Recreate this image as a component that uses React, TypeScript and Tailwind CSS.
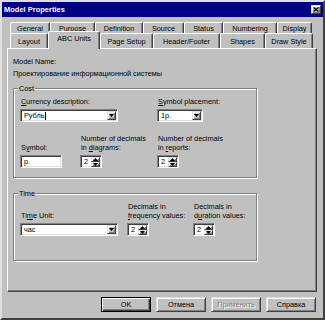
import React from 'react';

const base = "font-['Liberation_Sans',Arial,sans-serif] text-[7.3px] leading-[9px]";
const txt = `${base} text-black`;
const sunken =
  'border border-t-[#808080] border-l-[#808080] border-r-white border-b-white shadow-[inset_1px_1px_0_#404040,inset_-1px_-1px_0_#dfdfdf] bg-white';
const raised =
  'border border-t-[#dfdfdf] border-l-[#dfdfdf] border-r-[#404040] border-b-[#404040] shadow-[inset_1px_1px_0_#fff,inset_-1px_-1px_0_#808080] bg-[#c0c0c0]';

const topTabs = [
  { label: 'General', w: 'w-[40px]' },
  { label: 'Purpose', w: 'w-[45px]' },
  { label: 'Definition', w: 'w-[48px]' },
  { label: 'Source', w: 'w-[41px]' },
  { label: 'Status', w: 'w-[39px]' },
  { label: 'Numbering', w: 'w-[54px]' },
  { label: 'Display', w: 'w-[35px]' },
];

const frontTabs = [
  { label: 'Layout', w: 'w-[38px]' },
  { label: 'ABC Units', w: 'w-[52px]', active: true },
  { label: 'Page Setup', w: 'w-[53px]' },
  { label: 'Header/Footer', w: 'w-[67px]' },
  { label: 'Shapes', w: 'w-[45px]' },
  { label: 'Draw Style', w: 'w-[48px]' },
];

function Arrow({ up }: { up?: boolean }) {
  return (
    <svg width="5" height="3" viewBox="0 0 5 3">
      <path d={up ? 'M2.5 0L5 3H0Z' : 'M0 0H5L2.5 3Z'} fill="#000" />
    </svg>
  );
}

function Combo({ value, width, caret }: { value: string; width: string; caret?: boolean }) {
  return (
    <div className={`${sunken} ${width} h-[13px] flex p-[1px]`}>
      <div className={`${txt} flex-1 flex items-center pl-[2px]`}>
        {value}
        {caret && <span className="inline-block w-px h-[8px] bg-black" />}
      </div>
      <div className={`${raised} w-[9px] h-full flex items-center justify-center`}>
        <Arrow />
      </div>
    </div>
  );
}

function Spinner({ value }: { value: string }) {
  return (
    <div className={`${sunken} w-[22px] h-[13px] flex p-[1px]`}>
      <div className={`${txt} flex-1 flex items-center pl-[2px]`}>{value}</div>
      <div className="w-[9px] h-full flex flex-col">
        <div className={`${raised} flex-1 flex items-center justify-center`}>
          <Arrow up />
        </div>
        <div className={`${raised} flex-1 flex items-center justify-center`}>
          <Arrow />
        </div>
      </div>
    </div>
  );
}

// etched group box; the caption sits over the top border
function Group({ title, children, className }: { title: string; children: React.ReactNode; className: string }) {
  return (
    <div
      className={`relative w-[244px] border border-[#808080] shadow-[1px_1px_0_#fff,inset_1px_1px_0_#fff] pl-[6px] pt-[8px] ${className}`}
    >
      <span className={`${txt} absolute -top-[5px] left-[4px] px-[1px] bg-[#c0c0c0]`}>{title}</span>
      {children}
    </div>
  );
}

function Field({
  lines,
  children,
  width,
  labelH = 'h-[18px]',
}: {
  lines: React.ReactNode[];
  children: React.ReactNode;
  width: string;
  labelH?: string;
}) {
  return (
    <div className={`${width} flex flex-col`}>
      <div className={`${txt} ${labelH} flex flex-col justify-end pl-[1px]`}>
        {lines.map((l, i) => (
          <div key={i}>{l}</div>
        ))}
      </div>
      <div className="mt-[3px]">{children}</div>
    </div>
  );
}

function Button({ label, isDefault, disabled }: { label: string; isDefault?: boolean; disabled?: boolean }) {
  const frame = isDefault
    ? 'border border-black shadow-[inset_1px_1px_0_#fff,inset_-1px_-1px_0_#404040,inset_-2px_-2px_0_#808080] bg-[#c0c0c0]'
    : raised;
  const tone = disabled ? 'text-[#808080] [text-shadow:1px_1px_0_#fff]' : 'text-black';
  return (
    <div className={`${frame} h-[15px] w-[50px] flex items-center justify-center`}>
      <span className={`${base} ${tone}`}>{label}</span>
    </div>
  );
}

export default function App() {
  return (
    <div className="w-[325px] h-[320px] bg-[#c0c0c0] border-2 border-t-[#dfdfdf] border-l-[#dfdfdf] border-r-[#404040] border-b-[#404040] flex flex-col">
      {/* Title bar */}
      <div className="h-[15px] bg-[#000080] flex items-center justify-between pl-[2px] pr-[2px]">
        <span className="font-['Liberation_Sans',Arial,sans-serif] font-bold text-[7.5px] text-white">
          Model Properties
        </span>
        <div className={`${raised} w-[10px] h-[9px] flex items-center justify-center`}>
          <svg width="6" height="5" viewBox="0 0 6 5">
            <path d="M0.5 0.5L5.5 4.5M5.5 0.5L0.5 4.5" stroke="#000" strokeWidth="1.3" />
          </svg>
        </div>
      </div>

      <div className="flex flex-col pl-[5px] pt-[5px]">
        {/* Back row of tabs */}
        <div className="flex ml-[3px] h-[11px]">
          {topTabs.map(t => (
            <div
              key={t.label}
              className={`${t.w} h-[11px] border-t border-l border-r border-t-white border-l-white border-r-[#404040] rounded-t-[2px] shadow-[inset_-1px_0_0_#808080] flex items-center justify-center`}
            >
              <span className={txt}>{t.label}</span>
            </div>
          ))}
        </div>
        {/* Front row of tabs */}
        <div className="flex items-end ml-[3px] h-[15px]">
          {frontTabs.map(t => (
            <div
              key={t.label}
              className={`${t.w} ${
                t.active ? 'h-[18px] -mb-[1px] relative z-10 pt-[2px] items-start' : 'h-[15px] items-center'
              } bg-[#c0c0c0] border-t border-l border-r border-t-white border-l-white border-r-[#404040] rounded-t-[2px] shadow-[inset_-1px_0_0_#808080] flex justify-center`}
            >
              <span className={txt}>{t.label}</span>
            </div>
          ))}
        </div>

        {/* Panel */}
        <div className="w-[310px] h-[244px] border border-t-white border-l-white border-r-[#404040] border-b-[#404040] shadow-[inset_-1px_-1px_0_#808080] flex flex-col pl-[5px] pt-[8px]">
          <div className={txt}>Model Name:</div>
          <div className={`${txt} mt-[3px]`}>Проектирование информационной системы</div>

          <Group title="Cost" className="mt-[10px] h-[90px]">
            <div className="flex">
              <Field
                width="w-[137px]"
                labelH="h-[9px]"
                lines={[
                  <>
                    <span className="underline">C</span>urrency description:
                  </>,
                ]}
              >
                <Combo value="Рубль" width="w-[98px]" caret />
              </Field>
              <Field
                width="w-[80px]"
                labelH="h-[9px]"
                lines={[
                  <>
                    <span className="underline">S</span>ymbol placement:
                  </>,
                ]}
              >
                <Combo value="1р." width="w-[46px]" />
              </Field>
            </div>
            <div className="flex mt-[12px]">
              <Field
                width="w-[60px]"
                lines={[
                  <>
                    S<span className="underline">y</span>mbol:
                  </>,
                ]}
              >
                <div className={`${sunken} w-[42px] h-[13px] flex items-center pl-[3px]`}>
                  <span className={txt}>р.</span>
                </div>
              </Field>
              <Field
                width="w-[77px]"
                lines={[
                  'Number of decimals',
                  <>
                    in <span className="underline">d</span>iagrams:
                  </>,
                ]}
              >
                <Spinner value="2" />
              </Field>
              <Field
                width="w-[80px]"
                lines={[
                  'Number of decimals',
                  <>
                    in <span className="underline">r</span>eports:
                  </>,
                ]}
              >
                <Spinner value="2" />
              </Field>
            </div>
          </Group>

          <Group title="Time" className="mt-[15px] h-[68px]">
            <div className="flex">
              <Field
                width="w-[107px]"
                lines={[
                  <>
                    Ti<span className="underline">m</span>e Unit:
                  </>,
                ]}
              >
                <Combo value="час" width="w-[98px]" />
              </Field>
              <Field
                width="w-[66px]"
                lines={[
                  'Decimals in',
                  <>
                    <span className="underline">f</span>requency values:
                  </>,
                ]}
              >
                <Spinner value="2" />
              </Field>
              <Field
                width="w-[60px]"
                lines={[
                  'Decimals in',
                  <>
                    d<span className="underline">u</span>ration values:
                  </>,
                ]}
              >
                <Spinner value="2" />
              </Field>
            </div>
          </Group>
        </div>

        {/* Buttons */}
        <div className="flex justify-end gap-[5px] mt-[5px] w-[310px] pr-[1px]">
          <Button label="OK" isDefault />
          <Button label="Отмена" />
          <Button label="Применить" disabled />
          <Button label="Справка" />
        </div>
      </div>
    </div>
  );
}
